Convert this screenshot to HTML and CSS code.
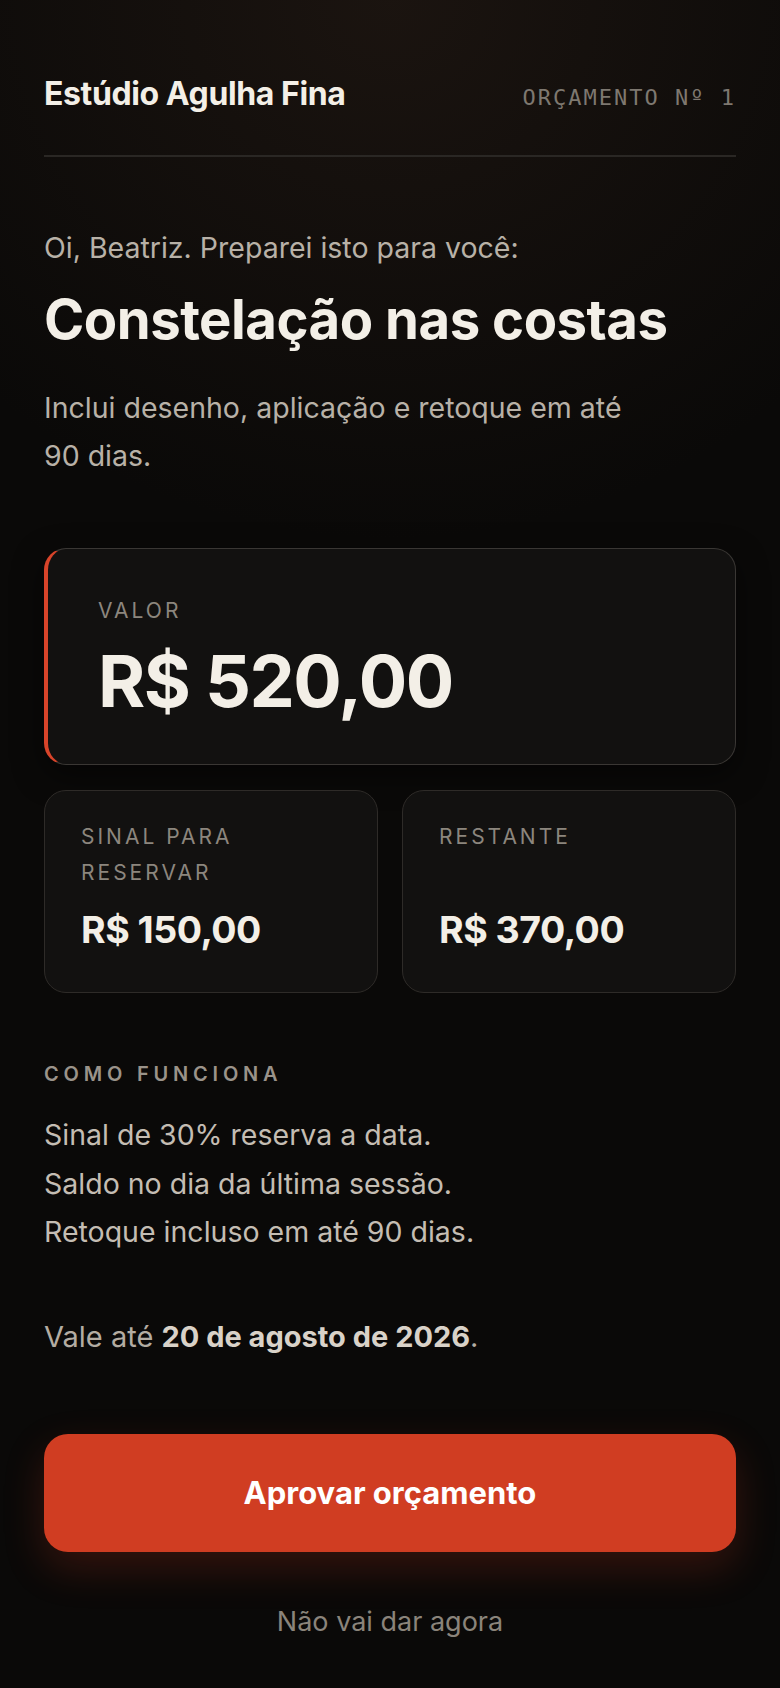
FILE: index.html
```html
<!DOCTYPE html>
<html lang="pt-BR">
<head>
    <meta charset="UTF-8">
    <meta name="viewport" content="width=device-width, initial-scale=1.0">
    <title>Orçamento Nº 1 - Estúdio Agulha Fina</title>
    <link rel="stylesheet" href="styles.css">
</head>
<body>

    <main class="page">

        <header class="topbar">
            <span class="studio">Estúdio Agulha Fina</span>
            <span class="quote-no">ORÇAMENTO Nº 1</span>
        </header>

        <section class="intro">
            <p class="greeting">Oi, Beatriz. Preparei isto para você:</p>
            <h1>Constelação nas costas</h1>
            <p class="summary">Inclui desenho, aplicação e retoque em até 90 dias.</p>
        </section>

        <section class="amounts">
            <div class="total-card">
                <span class="label">Valor</span>
                <strong class="total">R$ 520,00</strong>
            </div>

            <div class="split">
                <div class="split-card">
                    <span class="label">Sinal para reservar</span>
                    <strong class="amount">R$ 150,00</strong>
                </div>
                <div class="split-card">
                    <span class="label">Restante</span>
                    <strong class="amount">R$ 370,00</strong>
                </div>
            </div>
        </section>

        <section class="how">
            <h2>Como funciona</h2>
            <ul>
                <li>Sinal de 30% reserva a data.</li>
                <li>Saldo no dia da última sessão.</li>
                <li>Retoque incluso em até 90 dias.</li>
            </ul>
        </section>

        <p class="validity">Vale até <strong>20 de agosto de 2026</strong>.</p>

        <div class="actions">
            <button class="approve">Aprovar orçamento</button>
            <button class="decline">Não vai dar agora</button>
        </div>

    </main>

</body>
</html>
```

FILE: styles.css
```css
/* Global Styles */
body {
    margin: 0;
    padding: 0;
    background-color: #0a0908;
    font-family: Inter, "Noto Sans", sans-serif;
    color: #f3efe7;
}

.page {
    box-sizing: border-box;
    min-height: 1688px;
    padding: 76px 44px 40px;
    background:
        radial-gradient(ellipse 75% 32% at 50% 0%, rgba(58, 40, 30, 0.35), rgba(10, 9, 8, 0) 100%),
        #0a0908;
}

/* Header */
.topbar {
    display: flex;
    justify-content: space-between;
    align-items: baseline;
    padding-bottom: 43px;
    border-bottom: 2px solid #2a2724;
}

.studio {
    font-size: 32px;
    font-weight: 700;
    line-height: 36px;
    letter-spacing: -0.4px;
}

.quote-no {
    font-family: "DejaVu Sans Mono", "Liberation Mono", monospace;
    font-size: 22px;
    letter-spacing: 2px;
    color: #7e7870;
}

/* Intro */
.greeting {
    margin: 72px 0 0;
    font-size: 28.5px;
    line-height: 38px;
    color: #b8b1a7;
}

h1 {
    margin: 22px 0 0;
    font-size: 54.5px;
    line-height: 60px;
    font-weight: 700;
    letter-spacing: -0.5px;
}

.summary {
    margin: 35px 0 0;
    max-width: 600px;
    font-size: 28.5px;
    line-height: 48px;
    color: #b8b1a7;
}

/* Amount cards */
.label {
    font-size: 21px;
    line-height: 1.7;
    letter-spacing: 3px;
    text-transform: uppercase;
    color: #8c867e;
}

.total-card {
    display: flex;
    flex-direction: column;
    margin-top: 68px;
    padding: 44px 50px;
    background-color: #121110;
    border: 1.5px solid #3a3734;
    border-left: 4px solid #d8442a;
    border-radius: 22px;
    box-shadow: 0 10px 30px rgba(0, 0, 0, 0.5);
}

.total {
    margin-top: 12px;
    font-size: 72px;
    font-weight: 700;
    line-height: 1.1;
    letter-spacing: -1.5px;
}

.split {
    display: grid;
    grid-template-columns: 1fr 1fr;
    gap: 24px;
    margin-top: 25px;
}

.split-card {
    display: flex;
    flex-direction: column;
    padding: 28px 36px 32px;
    background-color: #121110;
    border: 1.5px solid #2e2b28;
    border-radius: 22px;
}

.split-card .label {
    margin-bottom: 10px;
}

.amount {
    margin-top: auto;
    font-size: 37.5px;
    font-weight: 700;
    line-height: 1.6;
    letter-spacing: -0.5px;
}

/* How it works */
.how {
    margin-top: 67px;
}

.how h2 {
    margin: 0;
    font-size: 20px;
    font-weight: 600;
    line-height: 28px;
    letter-spacing: 4.8px;
    text-transform: uppercase;
    color: #9a938a;
}

.how ul {
    list-style: none;
    margin: 23px 0 0;
    padding: 0;
    font-size: 28.5px;
    line-height: 48.5px;
    color: #c4bdb3;
}

.validity {
    margin: 61px 0 0;
    font-size: 29px;
    line-height: 38px;
    color: #b3aca2;
}

.validity strong {
    font-weight: 700;
    color: #d9d2c8;
}

/* Actions */
.actions {
    display: flex;
    flex-direction: column;
    align-items: center;
}

.approve {
    width: 100%;
    height: 118px;
    margin-top: 78px;
    border: none;
    border-radius: 24px;
    background-color: #d03d22;
    color: #ffffff;
    font-family: inherit;
    font-size: 31px;
    font-weight: 700;
    box-shadow: 0 16px 40px rgba(208, 61, 34, 0.22);
}

.decline {
    margin-top: 51px;
    padding: 0;
    border: none;
    background: none;
    font-family: inherit;
    font-size: 27px;
    line-height: 1.4;
    color: #8a847b;
}
```
